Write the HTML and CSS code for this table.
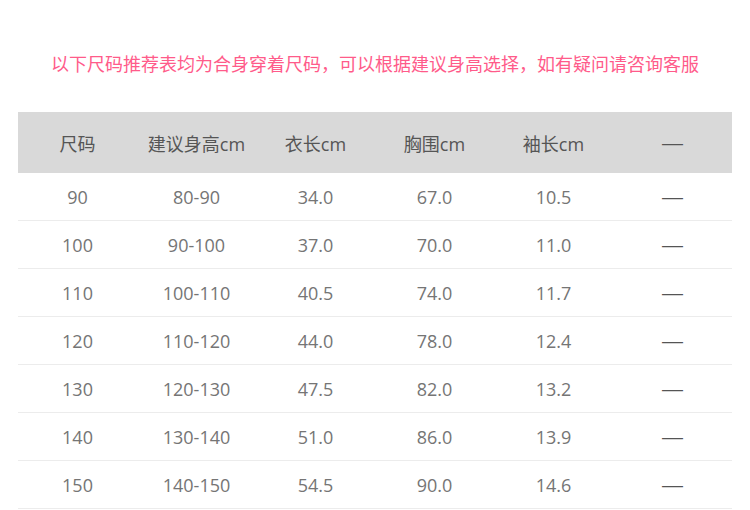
FILE: index.html
```html
<!DOCTYPE html>
<html lang="zh">
<head>
<meta charset="utf-8">
<link rel="stylesheet" href="styles.css">
</head>
<body>
<div class="page">
  <p class="note">以下尺码推荐表均为合身穿着尺码，可以根据建议身高选择，如有疑问请咨询客服</p>
  <table class="size-table">
    <thead>
      <tr><th>尺码</th><th>建议身高cm</th><th>衣长cm</th><th>胸围cm</th><th>袖长cm</th><th><span class="dash">—</span></th></tr>
    </thead>
    <tbody>
      <tr><td>90</td><td>80-90</td><td>34.0</td><td>67.0</td><td>10.5</td><td><span class="dash">—</span></td></tr>
      <tr><td>100</td><td>90-100</td><td>37.0</td><td>70.0</td><td>11.0</td><td><span class="dash">—</span></td></tr>
      <tr><td>110</td><td>100-110</td><td>40.5</td><td>74.0</td><td>11.7</td><td><span class="dash">—</span></td></tr>
      <tr><td>120</td><td>110-120</td><td>44.0</td><td>78.0</td><td>12.4</td><td><span class="dash">—</span></td></tr>
      <tr><td>130</td><td>120-130</td><td>47.5</td><td>82.0</td><td>13.2</td><td><span class="dash">—</span></td></tr>
      <tr><td>140</td><td>130-140</td><td>51.0</td><td>86.0</td><td>13.9</td><td><span class="dash">—</span></td></tr>
      <tr><td>150</td><td>140-150</td><td>54.5</td><td>90.0</td><td>14.6</td><td><span class="dash">—</span></td></tr>
    </tbody>
  </table>
</div>
</body>
</html>
```
FILE: styles.css
```css
html, body {
  margin: 0;
  padding: 0;
  background: #fff;
}
.page {
  padding: 0 18px;
  font-family: "Open Sans", "Noto Sans CJK SC", sans-serif;
}
.note {
  margin: 0;
  padding-top: 50px;
  height: 62px;
  line-height: 26px;
  text-align: center;
  font-size: 18px;
  color: #ff5b8a;
  font-family: "Noto Sans CJK SC", sans-serif;
}
.size-table {
  width: 714px;
  border-collapse: collapse;
  table-layout: fixed;
}
.size-table th {
  background: #d9d9d9;
  height: 61px;
  padding: 0;
  font-weight: normal;
  font-size: 18px;
  color: #555;
  text-align: center;
}
.size-table td {
  height: 47px;
  padding: 0;
  border-bottom: 1px solid #ececec;
  font-size: 18px;
  color: #757575;
  text-align: center;
}
.dash {
  font-family: "Liberation Sans", sans-serif;
  color: #555;
  font-size: 21px;
}
```
